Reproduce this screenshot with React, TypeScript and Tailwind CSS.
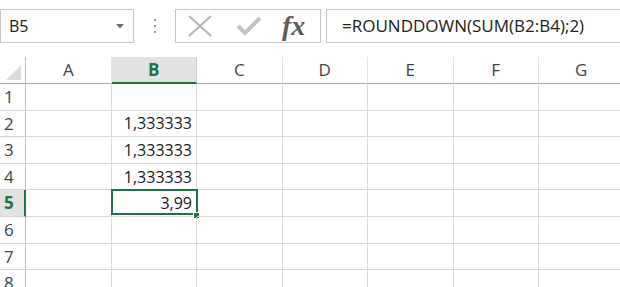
const COLS = ["A", "B", "C", "D", "E", "F", "G"];

// row number -> value in column B
const VALUES: Record<number, string> = {
  2: "1,333333",
  3: "1,333333",
  4: "1,333333",
  5: "3,99",
};

const ROWS = [1, 2, 3, 4, 5, 6, 7, 8];

function Toolbar() {
  return (
    <div className="flex h-[57px] items-start pt-[9px]">
      {/* Name box */}
      <div className="flex h-[34px] w-[134px] shrink-0 items-center justify-between border border-[#c6c6c6] pl-[8px] pr-[9px]">
        <span className="text-[16px] text-[#222]">B5</span>
        <svg width="8" height="5" viewBox="0 0 8 5">
          <path d="M0 0h8L4 4.5z" fill="#6b6b6b" />
        </svg>
      </div>

      {/* Separator dots */}
      <div className="flex h-[34px] w-[41px] shrink-0 flex-col items-center justify-center gap-[4px]">
        <span className="h-[2px] w-[2px] bg-[#9a9a9a]" />
        <span className="h-[2px] w-[2px] bg-[#9a9a9a]" />
        <span className="h-[2px] w-[2px] bg-[#9a9a9a]" />
      </div>

      {/* Cancel / enter / insert function */}
      <div className="flex h-[34px] w-[146px] shrink-0 items-center border border-[#c6c6c6] pl-[12px]">
        <svg width="24" height="22" viewBox="0 0 24 22">
          <path d="M1 1l22 20M23 1L1 21" stroke="#b4b4b4" strokeWidth="2" fill="none" />
        </svg>
        <svg className="ml-[24px]" width="26" height="20" viewBox="0 0 26 20">
          <path d="M2 10l7 7L24 2" stroke="#c2c2c2" strokeWidth="4" fill="none" />
        </svg>
        <span
          className="ml-[20px] text-[28px] font-bold italic leading-none text-[#5c5c5c]"
          style={{ fontFamily: '"Liberation Serif", serif' }}
        >
          fx
        </span>
      </div>

      {/* Formula box */}
      <div className="ml-[5px] flex h-[34px] w-[320px] shrink-0 items-center border border-[#c6c6c6] pl-[15px]">
        <span className="text-[17px] text-[#222]">=ROUNDDOWN(SUM(B2:B4);2)</span>
      </div>
    </div>
  );
}

function Grid() {
  return (
    <div className="grid grid-cols-[26px_repeat(7,85.5px)] grid-rows-[27px_repeat(8,26.6px)]">
      {/* Corner */}
      <div className="flex items-end justify-end border-r border-b border-r-[#bdbdbd] border-b-[#ababab] pr-[4px] pb-[3px]">
        <svg width="15" height="15" viewBox="0 0 15 15">
          <path d="M15 0v15H0z" fill="#dcdcdc" />
        </svg>
      </div>
      {COLS.map((c) =>
        c === "B" ? (
          <div
            key={c}
            className="flex items-center justify-center border-r border-b-2 border-r-[#d4d4d4] border-b-[#217346] bg-[#e2e2e2] text-[17px] font-bold text-[#217346]"
          >
            {c}
          </div>
        ) : (
          <div
            key={c}
            className="flex items-center justify-center border-r border-b border-r-[#e4e4e4] border-b-[#ababab] text-[17px] text-[#444]"
          >
            {c}
          </div>
        )
      )}

      {ROWS.map((r) => (
        <Row key={r} r={r} />
      ))}
    </div>
  );
}

function Row({ r }: { r: number }) {
  const active = r === 5;
  return (
    <>
      {active ? (
        <div className="flex items-center border-r-2 border-b border-r-[#217346] border-b-[#d4d4d4] bg-[#e2e2e2] pl-[4px] text-[17px] font-bold text-[#217346]">
          {r}
        </div>
      ) : (
        <div className="flex items-center border-r border-b border-r-[#bdbdbd] border-b-[#d4d4d4] pl-[4px] text-[17px] text-[#444]">
          {r}
        </div>
      )}
      {COLS.map((c) => (
        <div
          key={c}
          className="relative flex items-center justify-end border-r border-b border-[#d9d9d9] pr-[4px] text-[16px] text-[#1a1a1a]"
        >
          {c === "B" && VALUES[r]}
          {c === "B" && active && (
            <>
              <div className="absolute -top-[1px] -left-[1px] right-[-2px] bottom-[1px] border-2 border-[#217346]" />
              <div className="absolute right-[-4px] bottom-[-3px] h-[7px] w-[7px] border border-white bg-[#217346]" />
            </>
          )}
        </div>
      ))}
    </>
  );
}

export default function App() {
  return (
    <div
      className="h-[287px] w-[620px] overflow-hidden bg-white"
      style={{ fontFamily: '"Open Sans", "Liberation Sans", sans-serif' }}
    >
      <Toolbar />
      <Grid />
    </div>
  );
}
